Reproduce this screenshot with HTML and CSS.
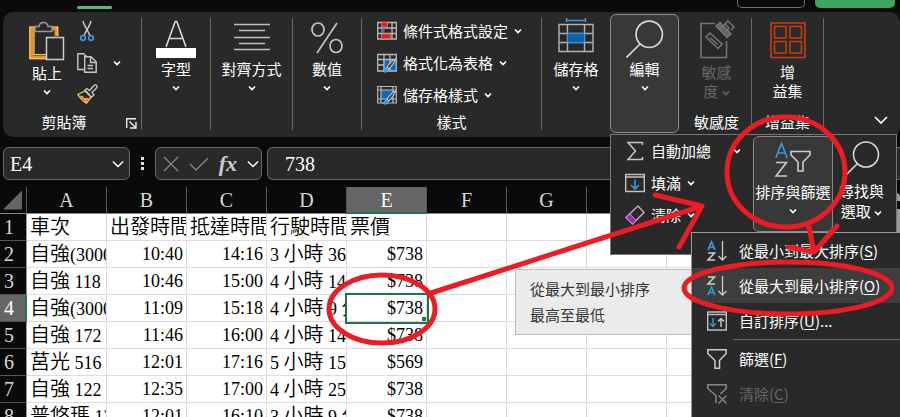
FILE: index.html
```html
<!DOCTYPE html>
<html lang="zh-Hant">
<head>
<meta charset="utf-8">
<title>試算表</title>
<link rel="stylesheet" href="styles.css">
</head>
<body>
<svg class="defs" aria-hidden="true">
  <symbol id="chev" viewBox="0 0 8 8"><path d="M1 2.500 4 5.500 7 2.500" fill="none" stroke="currentColor" stroke-width="1.600"/></symbol>
  <symbol id="chev-lg" viewBox="0 0 14 8"><path d="M1 1 7 7 13 1" fill="none" stroke="currentColor" stroke-width="1.600"/></symbol>
  <symbol id="lens" viewBox="0 0 36 36"><g fill="none" stroke="#d8d8d8" stroke-width="1.600"><circle cx="22" cy="13.500" r="12.500"/><path d="M13.500 22.500 .5 35.500"/></g></symbol>
  <symbol id="brush" viewBox="0 0 14 15"><path d="M13 1 C10 2 6 6 4.500 9 L6.500 11 C9 9 12.500 4 13 1Z" fill="#555" stroke="#ddd"/><path d="M4 9.500 C2 9.500 2.500 12.500 0 13.500 C3 15 6 14 6.500 11.500Z" fill="#3a9be0" stroke="#7cc0ef" stroke-width=".6"/></symbol>
  <symbol id="funnel" viewBox="0 0 20 20"><path d="M.8 .8H19.200V4.500L12.500 11.500V19.200H8V11.500L.8 4.500Z" fill="none" stroke="#ccc" stroke-width="1.500"/></symbol>
</svg>

<header class="tabs"><span class="tab-mark"></span><span class="stub comment"></span><span class="stub share"></span></header>

<nav class="ribbon" aria-label="常用">
  <section class="group clipboard">
    <div class="clip-tools">
      <button class="big">
        <svg width="36" height="40" viewBox="0 0 36 40"><path d="M7 6.500H2.500V35.500H17M23 6.500H27.500V14" fill="none" stroke="#e8921c" stroke-width="4"/><path d="M6 5H.8V36.500H17M24 5H28.500V14M5 8V32.500H17" fill="none" stroke="#f4c878" stroke-width="1.200"/><path d="M6 9.500V4.500H10C10.500 -1 18.500 -1 19 4.500H23V9.500Z" fill="#292929" stroke="#989898" stroke-width="1.500"/><path d="M17.500 15.500H34.500V37.500H17.500Z" fill="#292929" stroke="#ccc" stroke-width="1.500"/></svg>
        <span>貼上</span><svg class="chev"><use href="#chev"/></svg>
      </button>
      <div class="clip-small">
        <button aria-label="剪下"><svg width="20" height="22" viewBox="0 0 20 22"><path d="M6 1C7 6 12 12 13 16M14 1C13 6 8 12 7 16" fill="none" stroke="#d0d0d0" stroke-width="1.400"/><g fill="none" stroke="#3a96dd" stroke-width="1.700"><circle cx="6" cy="18" r="2.300"/><circle cx="14" cy="18" r="2.300"/></g></svg></button>
        <button aria-label="複製"><svg width="20" height="20" viewBox="0 0 20 20"><g fill="none" stroke="#c8c8c8" stroke-width="1.400"><path d="M7 16.500H.8V.8H6.500L9.500 3.500"/><path d="M7.700 3.700H14L19.200 9V19.200H7.700ZM13.500 4V9.500H19M10.500 12.500H16M10.500 15.500H16"/></g></svg></button>
        <button aria-label="複製格式"><svg width="21" height="20" viewBox="0 0 21 20"><path d="M8 7 .8 10.500C3 14 6 17.500 9.500 19.200L14 13Z" fill="#292929" stroke="#f4c878" stroke-width="1.300"/><path d="M2 11.500 6 12 7 14 12 14 9 18.500Z" fill="#f0a029"/><path d="M8 6 10 4.500 12.500 6.500 17 1.500C19 0 21 2 19.500 4L15 8.500 17 11 14.500 13.200Z" fill="#292929" stroke="#ccc" stroke-width="1.300"/></svg></button>
      </div>
      <button class="copy-more" aria-label="複製選項"><svg class="chev"><use href="#chev"/></svg></button>
    </div>
    <footer>剪貼簿<button class="launch" aria-label="剪貼簿設定"><svg width="11" height="11" viewBox="0 0 11 11"><path d="M.7 10V.7H10M3.500 3.500 9.500 9.500M10 4V10H4" fill="none" stroke="#eee" stroke-width="1.400"/></svg></button></footer>
  </section>

  <section class="group font">
    <button class="big"><svg width="40" height="38" viewBox="0 0 40 38"><path d="M10 27 19.200 1.500H20.800L30 27M13 18.500H27" fill="none" stroke="#d8d8d8" stroke-width="1.600"/><path d="M0 28H40V38H0Z" fill="#fff"/></svg><span>字型</span><svg class="chev"><use href="#chev"/></svg></button>
  </section>
  <section class="group align">
    <button class="big"><svg width="36" height="38" viewBox="0 0 36 38"><path d="M0 4.500H36M5 10.500H31M0 17.500H36M5 23.500H31M0 29.500H36" stroke="#bfbfbf" stroke-width="1.600"/></svg><span>對齊方式</span><svg class="chev"><use href="#chev"/></svg></button>
  </section>
  <section class="group number">
    <button class="big"><svg width="32" height="38" viewBox="0 0 32 38"><g fill="none" stroke="#c4c4c4" stroke-width="1.700"><ellipse cx="7" cy="9.500" rx="6" ry="6.500"/><ellipse cx="25" cy="26" rx="6" ry="6.500"/><path d="M26 3 6 33"/></g></svg><span>數值</span><svg class="chev"><use href="#chev"/></svg></button>
  </section>

  <section class="group styles">
    <button class="row"><svg width="20" height="20" viewBox="0 0 20 20"><path d="M.7 1.500H19.300V18H.7ZM5 1.500V18M15 1.500V18M.7 7H19.300M.7 12.500H19.300" fill="none" stroke="#bbb" stroke-width="1.300"/><path d="M4.500 1.500H10.500V6H4.500ZM4.500 13H13.500V17.500H4.500Z" fill="#d8201c" stroke="#ff5a50"/><path d="M4.500 7.500H7.500V12H4.500Z" fill="#1a7fd0"/></svg><span>條件式格式設定</span><svg class="chev"><use href="#chev"/></svg></button>
    <button class="row"><svg width="20" height="20" viewBox="0 0 20 20"><path d="M6 6H19V18H6Z" fill="#0a68bd"/><path d="M.7 1.500H19.300V18H.7ZM7 1.500V18M13 1.500V18M.7 6.500H19.300M.7 12H7" fill="none" stroke="#bbb" stroke-width="1.300"/><use href="#brush" x="5" y="5" width="15" height="15"/></svg><span>格式化為表格</span><svg class="chev"><use href="#chev"/></svg></button>
    <button class="row"><svg width="20" height="20" viewBox="0 0 20 20"><path d="M4 5H16V14H4Z" fill="#0a68bd"/><path d="M.7 1.500H19.300V18H.7ZM4 1.500V18M16 1.500V18M.7 5H19.300M.7 14H19" fill="none" stroke="#bbb" stroke-width="1.200"/><use href="#brush" x="5" y="5" width="15" height="15"/></svg><span>儲存格樣式</span><svg class="chev"><use href="#chev"/></svg></button>
    <footer>樣式</footer>
  </section>

  <section class="group cells">
    <button class="big"><svg width="36" height="38" viewBox="0 0 36 38"><path d="M8.500 -2V2M27.500 -2V2M8.500 .5H27.500" fill="none" stroke="#3a96dd" stroke-width="1.400"/><path d="M1 4.500H35V31.500H1ZM9.500 4.500V31.500M26.500 4.500V31.500M1 13.500H35M1 22.500H35" fill="none" stroke="#b4b4b4" stroke-width="1.400"/><path d="M9.500 13.500H26.500V22.500H9.500Z" fill="#0a62b5" stroke="#3a96dd"/></svg><span>儲存格</span><svg class="chev"><use href="#chev"/></svg></button>
  </section>

  <section class="group edit">
    <button class="big open"><svg width="38" height="38" viewBox="0 0 38 38"><use href="#lens" x="0" y="0" width="38" height="38"/></svg><span>編輯</span><svg class="chev"><use href="#chev"/></svg></button>
  </section>

  <section class="group sens">
    <button class="big tall" disabled><svg width="36" height="40" viewBox="0 0 36 40"><g fill="none" stroke="#777" stroke-width="1.500"><path d="M16 3.500H2V37.500H27.500V21"/><path d="M7 17 11 13 23 24 19 28.500ZM11 17.500 18.500 24.500"/><path d="M17 6 21 2.500 32 14 28 17.500Z" fill="#666"/><path d="M22 8 26 4 30 8 26 12M26 4 29 1 35 7 32 10"/></g></svg><span>敏感<br>度 <svg class="chev inline"><use href="#chev"/></svg></span></button>
    <footer>敏感度</footer>
  </section>
  <section class="group addins">
    <button class="big tall"><svg width="36" height="40" viewBox="0 0 36 40"><g fill="none" stroke="#c43e0c" stroke-width="1.600"><path d="M1 3H35V37.500H1Z"/><path d="M4.500 6.500H16V18H4.500ZM20 6.500H31.500V18H20ZM4.500 21.500H16V33H4.500ZM20 21.500H31.500V33H20Z"/></g></svg><span>增<br>益集</span></button>
    <footer>增益集</footer>
  </section>
  <button class="collapse" aria-label="摺疊功能區"><svg width="14" height="8"><use href="#chev-lg"/></svg></button>
</nav>

<div class="formula-bar">
  <div class="box name"><input aria-label="名稱方塊" value="E4"><svg width="12" height="8"><use href="#chev-lg"/></svg></div>
  <span class="dots"><i></i><i></i><i></i></span>
  <div class="box actions">
    <button aria-label="取消"><svg width="16" height="16" viewBox="0 0 16 16"><path d="M1 1 15 15M15 1 1 15" stroke="#858585" stroke-width="1.400"/></svg></button>
    <button aria-label="輸入"><svg width="20" height="16" viewBox="0 0 20 16"><path d="M1 8 7 14 19 2" fill="none" stroke="#858585" stroke-width="1.400"/></svg></button>
    <button class="fx" aria-label="插入函數">fx</button>
    <svg width="12" height="8"><use href="#chev-lg"/></svg>
  </div>
  <div class="box formula"><input aria-label="資料編輯列" value="738"></div>
</div>

<main class="grid">
<div class="view">
<table class="sheet">
  <colgroup><col class="rowcol"><col span="11"></colgroup>
  <thead><tr><th class="corner"><i></i></th><th>A</th><th>B</th><th>C</th><th>D</th><th class="on">E</th><th>F</th><th>G</th><th>H</th><th>I</th><th>J</th><th>K</th></tr></thead>
  <tbody>
    <tr><th>1</th><td>車次</td><td>出發時間</td><td>抵達時間</td><td>行駛時間</td><td>票價</td><td></td><td></td><td></td><td></td><td></td><td></td></tr>
    <tr><th>2</th><td>自強<b>(3000)</b></td><td class="n">10:40</td><td class="n">14:16</td><td><b>3 </b>小時<b> 36</b></td><td class="n">$738</td><td></td><td></td><td></td><td></td><td></td><td></td></tr>
    <tr><th>3</th><td>自強<b> 118</b></td><td class="n">10:46</td><td class="n">15:00</td><td><b>4 </b>小時<b> 14</b></td><td class="n">$738</td><td></td><td></td><td></td><td></td><td></td><td></td></tr>
    <tr><th class="on">4</th><td>自強<b>(3000)</b></td><td class="n">11:09</td><td class="n">15:18</td><td><b>4 </b>小時<b> 9 </b>分</td><td class="n active">$738</td><td></td><td></td><td></td><td></td><td></td><td></td></tr>
    <tr><th>5</th><td>自強<b> 172</b></td><td class="n">11:46</td><td class="n">16:00</td><td><b>4 </b>小時<b> 14</b></td><td class="n">$738</td><td></td><td></td><td></td><td></td><td></td><td></td></tr>
    <tr><th>6</th><td>莒光<b> 516</b></td><td class="n">12:01</td><td class="n">17:16</td><td><b>5 </b>小時<b> 15</b></td><td class="n">$569</td><td></td><td></td><td></td><td></td><td></td><td></td></tr>
    <tr><th>7</th><td>自強<b> 122</b></td><td class="n">12:35</td><td class="n">17:00</td><td><b>4 </b>小時<b> 25</b></td><td class="n">$738</td><td></td><td></td><td></td><td></td><td></td><td></td></tr>
    <tr><th>8</th><td>普悠瑪<b> 12</b></td><td class="n">12:01</td><td class="n">16:10</td><td><b>3 </b>小時<b> 9 </b>分</td><td class="n">$738</td><td></td><td></td><td></td><td></td><td></td><td></td></tr>
  </tbody>
</table>
</div>
<div class="scroll"><i></i><b></b></div>
</main>

<div class="panel">
  <div class="panel-rows">
    <button class="row"><svg width="20" height="20" viewBox="0 0 20 20"><path d="M17.500 4V1.500H3L10.500 10 3 18.500H17.500V16" fill="none" stroke="#c8c8c8" stroke-width="1.500"/></svg><span>自動加總</span><svg class="chev far"><use href="#chev"/></svg></button>
    <button class="row"><svg width="20" height="20" viewBox="0 0 20 20"><path d="M.7 1.500H19.300V18.500H.7ZM.7 4H19.300" fill="none" stroke="#c0c0c0" stroke-width="1.400"/><path d="M10 6.500V15.500M6 12 10 16 14 12" fill="none" stroke="#3a96dd" stroke-width="1.600"/></svg><span>填滿</span><svg class="chev"><use href="#chev"/></svg></button>
    <button class="row"><svg width="20" height="20" viewBox="0 0 20 20"><path d="M1 12.500 13 1 19 7.500 7.500 19Z" fill="none" stroke="#d0a0d8" stroke-width="1.500"/><path d="M1 12.500 5 9 11 15.500 7.500 19Z" fill="#9a2aa8" stroke="#d080d8"/></svg><span>清除</span><svg class="chev"><use href="#chev"/></svg></button>
  </div>
  <button class="big sort"><svg width="36" height="36" viewBox="0 0 36 36"><path d="M.8 16 6.500 1.500 12.200 16M3 11H10" fill="none" stroke="#3a96dd" stroke-width="1.700"/><path d="M1 20.500H11.500L1 34H12" fill="none" stroke="#ccc" stroke-width="1.600"/><path d="M16 9.500H35V13L28 20V29H23V20L16 13Z" fill="none" stroke="#ccc" stroke-width="1.600"/></svg><span>排序與篩選</span><svg class="chev"><use href="#chev"/></svg></button>
  <button class="big find"><svg width="36" height="36" viewBox="0 0 36 36"><use href="#lens" x="0" y="0" width="36" height="36"/></svg><span>尋找與<br>選取 <svg class="chev inline"><use href="#chev"/></svg></span></button>
</div>

<div class="tip" role="tooltip"><p>從最大到最小排序</p><p>最高至最低</p></div>

<div class="menu" role="menu">
  <button role="menuitem"><svg width="20" height="20" viewBox="0 0 20 20"><path d="M1 9 4.500 .8 8 9M2.300 6.500H6.700" fill="none" stroke="#3a96dd" stroke-width="1.700"/><path d="M1 12H7.500L1 19H8" fill="none" stroke="#ccc" stroke-width="1.600"/><path d="M15.500 0V19M11.500 15 15.500 19 19.500 15" fill="none" stroke="#ccc" stroke-width="1.300"/></svg><span>從最小到最大排序(<u>S</u>)</span></button>
  <button role="menuitem" class="hot"><svg width="20" height="20" viewBox="0 0 20 20"><path d="M1 19 4.500 11 8 19M2.300 16.500H6.700" fill="none" stroke="#3a96dd" stroke-width="1.700"/><path d="M1 1H7.500L1 8H8" fill="none" stroke="#ccc" stroke-width="1.600"/><path d="M15.500 0V19M11.500 15 15.500 19 19.500 15" fill="none" stroke="#ccc" stroke-width="1.300"/></svg><span>從最大到最小排序(<u>O</u>)</span></button>
  <button role="menuitem"><svg width="20" height="20" viewBox="0 0 20 20"><path d="M.7 1H19.300V19H.7ZM.7 3.500H19.300" fill="none" stroke="#c0c0c0" stroke-width="1.400"/><path d="M6 7V15M3 12.500 6 15.500 9 12.500" fill="none" stroke="#3a96dd" stroke-width="1.400"/><path d="M14 16V8M11 10.500 14 7.500 17 10.500" fill="none" stroke="#ccc" stroke-width="1.400"/></svg><span>自訂排序(<u>U</u>)...</span></button>
  <hr>
  <button role="menuitem"><svg width="20" height="20"><use href="#funnel"/></svg><span>篩選(<u>F</u>)</span></button>
  <button role="menuitem" disabled><svg width="20" height="20" viewBox="0 0 20 20"><path d="M9 19V11.500L.8 4.500V.8H19.200V4.500L13.500 10" fill="none" stroke="#888" stroke-width="1.500"/><path d="M11.500 11.500 19.500 19.500M19.500 11.500 11.500 19.500" stroke="#888" stroke-width="1.300"/></svg><span>清除(<u>C</u>)</span></button>
</div>

<svg class="marks" width="900" height="417" viewBox="0 0 900 417" aria-hidden="true">
  <g fill="none" stroke="#ed1c24" stroke-width="5" stroke-linecap="round" stroke-linejoin="round">
    <ellipse cx="382" cy="309" rx="53" ry="34"/>
    <path d="M431 293 702 206M655 195 702 206 679 247"/>
    <ellipse cx="786" cy="172" rx="59" ry="55"/>
    <path d="M809 227 814 252M837 226 814 252 788 247"/>
    <ellipse cx="788" cy="288" rx="104" ry="26"/>
  </g>
</svg>
</body>
</html>
```
FILE: styles.css
```css
* { box-sizing: border-box; }
html { height: 100%; }
body {
  display: flex;
  flex-direction: column;
  margin: 0;
  height: 100%;
  overflow: hidden;
  background: #0a0a0a;
  color: #fff;
  font: 15px/20px "Noto Sans CJK TC", sans-serif;
}
button, input {
  margin: 0;
  padding: 0;
  border: 0;
  background: none;
  color: inherit;
  font: inherit;
}
svg { display: block; flex: none; overflow: visible; }
.defs { position: absolute; width: 0; height: 0; }
.chev { width: 8px; height: 8px; }

/* Tab strip */
.tabs { display: flex; flex: none; align-items: flex-start; height: 12px; padding: 0 5px 0 77px; gap: 10px; }
.tab-mark { width: 35px; height: 3px; margin: 6px auto 0 0; border-radius: 2px; background: #5fb878; }
.stub { height: 8px; border-radius: 0 0 5px 5px; }
.comment { width: 68px; border: 1px solid #707070; border-top: 0; }
.share { width: 80px; background: #3aa55f; }

/* Ribbon */
.ribbon {
  display: flex;
  flex: none;
  height: 125px;
  margin-left: 3px;
  padding: 6px 0 7px;
  border-radius: 10px;
  background: #292929;
}
.group {
  display: flex;
  flex-direction: column;
  flex: none;
  border-right: 1px solid #666;
}
.group footer { margin-top: auto; line-height: 16px; text-align: center; position: relative; }
.big { display: flex; flex-direction: column; align-items: center; text-align: center; padding-top: 2px; }
.big > span { margin-top: 1px; white-space: nowrap; }
.big > .chev { margin-top: 5px; }
.big:disabled { color: #666; }
.tall > span { line-height: 19px; margin-top: 2px; }
.chev.inline { display: inline-block; }
.row { display: flex; align-items: center; gap: 6px; height: 26px; white-space: nowrap; }
.clipboard { width: 139px; }
.clipboard footer { padding-right: 16px; }
.clip-tools { display: flex; padding-left: 26px; }
.clip-tools .big { padding-top: 4px; }
.clip-small { display: flex; flex-direction: column; gap: 11px; padding: 2px 0 0 12px; }
.copy-more { padding-left: 15px; height: 90px; }
.launch { position: absolute; right: 4px; bottom: 1px; }
.font { width: 69px; }
.align { width: 82px; }
.number { width: 69px; }
.styles { width: 180px; padding-left: 15px; gap: 6px; }
.styles footer { padding-right: 15px; }
.cells { width: 68px; border: 0; }
.edit { width: 69px; margin: -4px 0 -3px; border: 0; }
.open { flex: 1; border: 1px solid #8c8c8c; border-radius: 6px; background: #383838; padding-top: 5px; }
.sens { width: 73px; padding-left: 3px; }
.addins { width: 72px; }
.collapse { margin: auto 12px 6px auto; }

/* Formula bar */
.formula-bar { display: flex; flex: none; align-items: center; gap: 5px; padding: 10px 0 7px 3px; }
.box { display: flex; align-items: center; height: 33px; border: 1px solid #666; border-radius: 6px; background: #292929; }
.box input { font: 20px/24px "Liberation Serif", serif; min-width: 0; }
.name { width: 127px; padding: 0 5px 0 6px; justify-content: space-between; }
.name input { width: 90px; }
.dots { display: flex; flex-direction: column; align-items: center; gap: 2px; width: 15px; }
.dots i { width: 3px; height: 3px; background: #ddd; }
.actions { width: 107px; padding: 0 2px 0 7px; justify-content: space-between; }
.fx { font: italic bold 22px/24px "Liberation Serif", serif; color: #ccc; }
.formula { flex: 1; padding-left: 17px; border-right: 0; border-radius: 6px 0 0 6px; }

/* Sheet */
.grid { display: flex; flex: 1; min-height: 0; }
.view { flex: 1; min-width: 0; overflow: hidden; }
.scroll { width: 8px; padding-top: 6px; }
.scroll i, .scroll b { display: block; background: #999; }
.scroll i { height: 8px; border-radius: 4px 4px 0 0; margin-bottom: 8px; }
.scroll b { height: 60px; }
.sheet {
  width: 907px;
  table-layout: fixed;
  border-collapse: separate;
  border-spacing: 0;
  background: #fff;
  color: #000;
  font: 20px/24px "Liberation Serif", "Noto Sans CJK TC", serif;
}
.rowcol { width: 27px; }
.sheet tr > * { height: 27px; padding: 0 3px; overflow: hidden; white-space: nowrap; border: solid #dcdcdc; border-width: 0 1px 1px 0; text-align: left; }
.sheet td { font-weight: 350; }
.sheet b { font-weight: 400; font-size: 18px; line-height: 20px; }
.sheet .n { font-size: 18px; text-align: right; }
.sheet th { background: #0a0a0a; color: #d8d8d8; font-weight: 400; border-color: #555; }
.sheet thead th { text-align: center; border-bottom-color: #888; }
.sheet th.on { background: #666; color: #fff; }
.sheet thead th.on { border-bottom: 2px solid #217346; }
.sheet tbody th.on { border-right: 2px solid #217346; }
.sheet tbody th { padding-left: 4px; border-right-color: #999; }
.corner i { display: block; width: 19px; height: 19px; background: #666; clip-path: polygon(100% 0, 100% 100%, 0 100%); }
.sheet .active {
  outline: 2px solid #217346;
  background: linear-gradient(#217346, #217346) right bottom / 4px 4px no-repeat;
}

/* Pop-ups */
.panel, .menu { position: absolute; background: #292929; border: 1px solid #777; }
.panel { left: 610px; top: 134px; width: 287px; height: 121px; display: flex; }
.panel-rows { display: flex; flex-direction: column; gap: 6px; width: 142px; padding: 3px 0 0 14px; }
.panel-rows .far { margin-left: 16px; }
.sort { width: 80px; height: 96px; margin-top: 1px; padding-top: 5px; border: 1px solid #888; border-radius: 6px; background: #383838; }
.sort > span { margin-top: 4px; }
.find { padding: 6px 0 0 6px; }
.find > span { margin-top: 4px; }
.menu { left: 691px; top: 232px; right: 0; bottom: 0; border-width: 1px 0 0 1px; border-color: #999; }
.menu button { display: flex; align-items: center; gap: 12px; width: 100%; height: 35px; padding-left: 15px; }
.menu .hot { background: #3d3d3d; }
.menu button:disabled { color: #666; }
.menu hr { margin: 1px 0 1px 41px; border: 0; border-top: 1px solid #666; }
.menu u { text-underline-offset: 2px; }
.tip { position: absolute; left: 515px; top: 269px; width: 177px; padding: 6px 14px; background: #ebebeb; border: 1px solid #bbb; color: #333; }
.tip p { margin: 0; line-height: 26px; }
.marks { position: absolute; left: 0; top: 0; pointer-events: none; }
```
